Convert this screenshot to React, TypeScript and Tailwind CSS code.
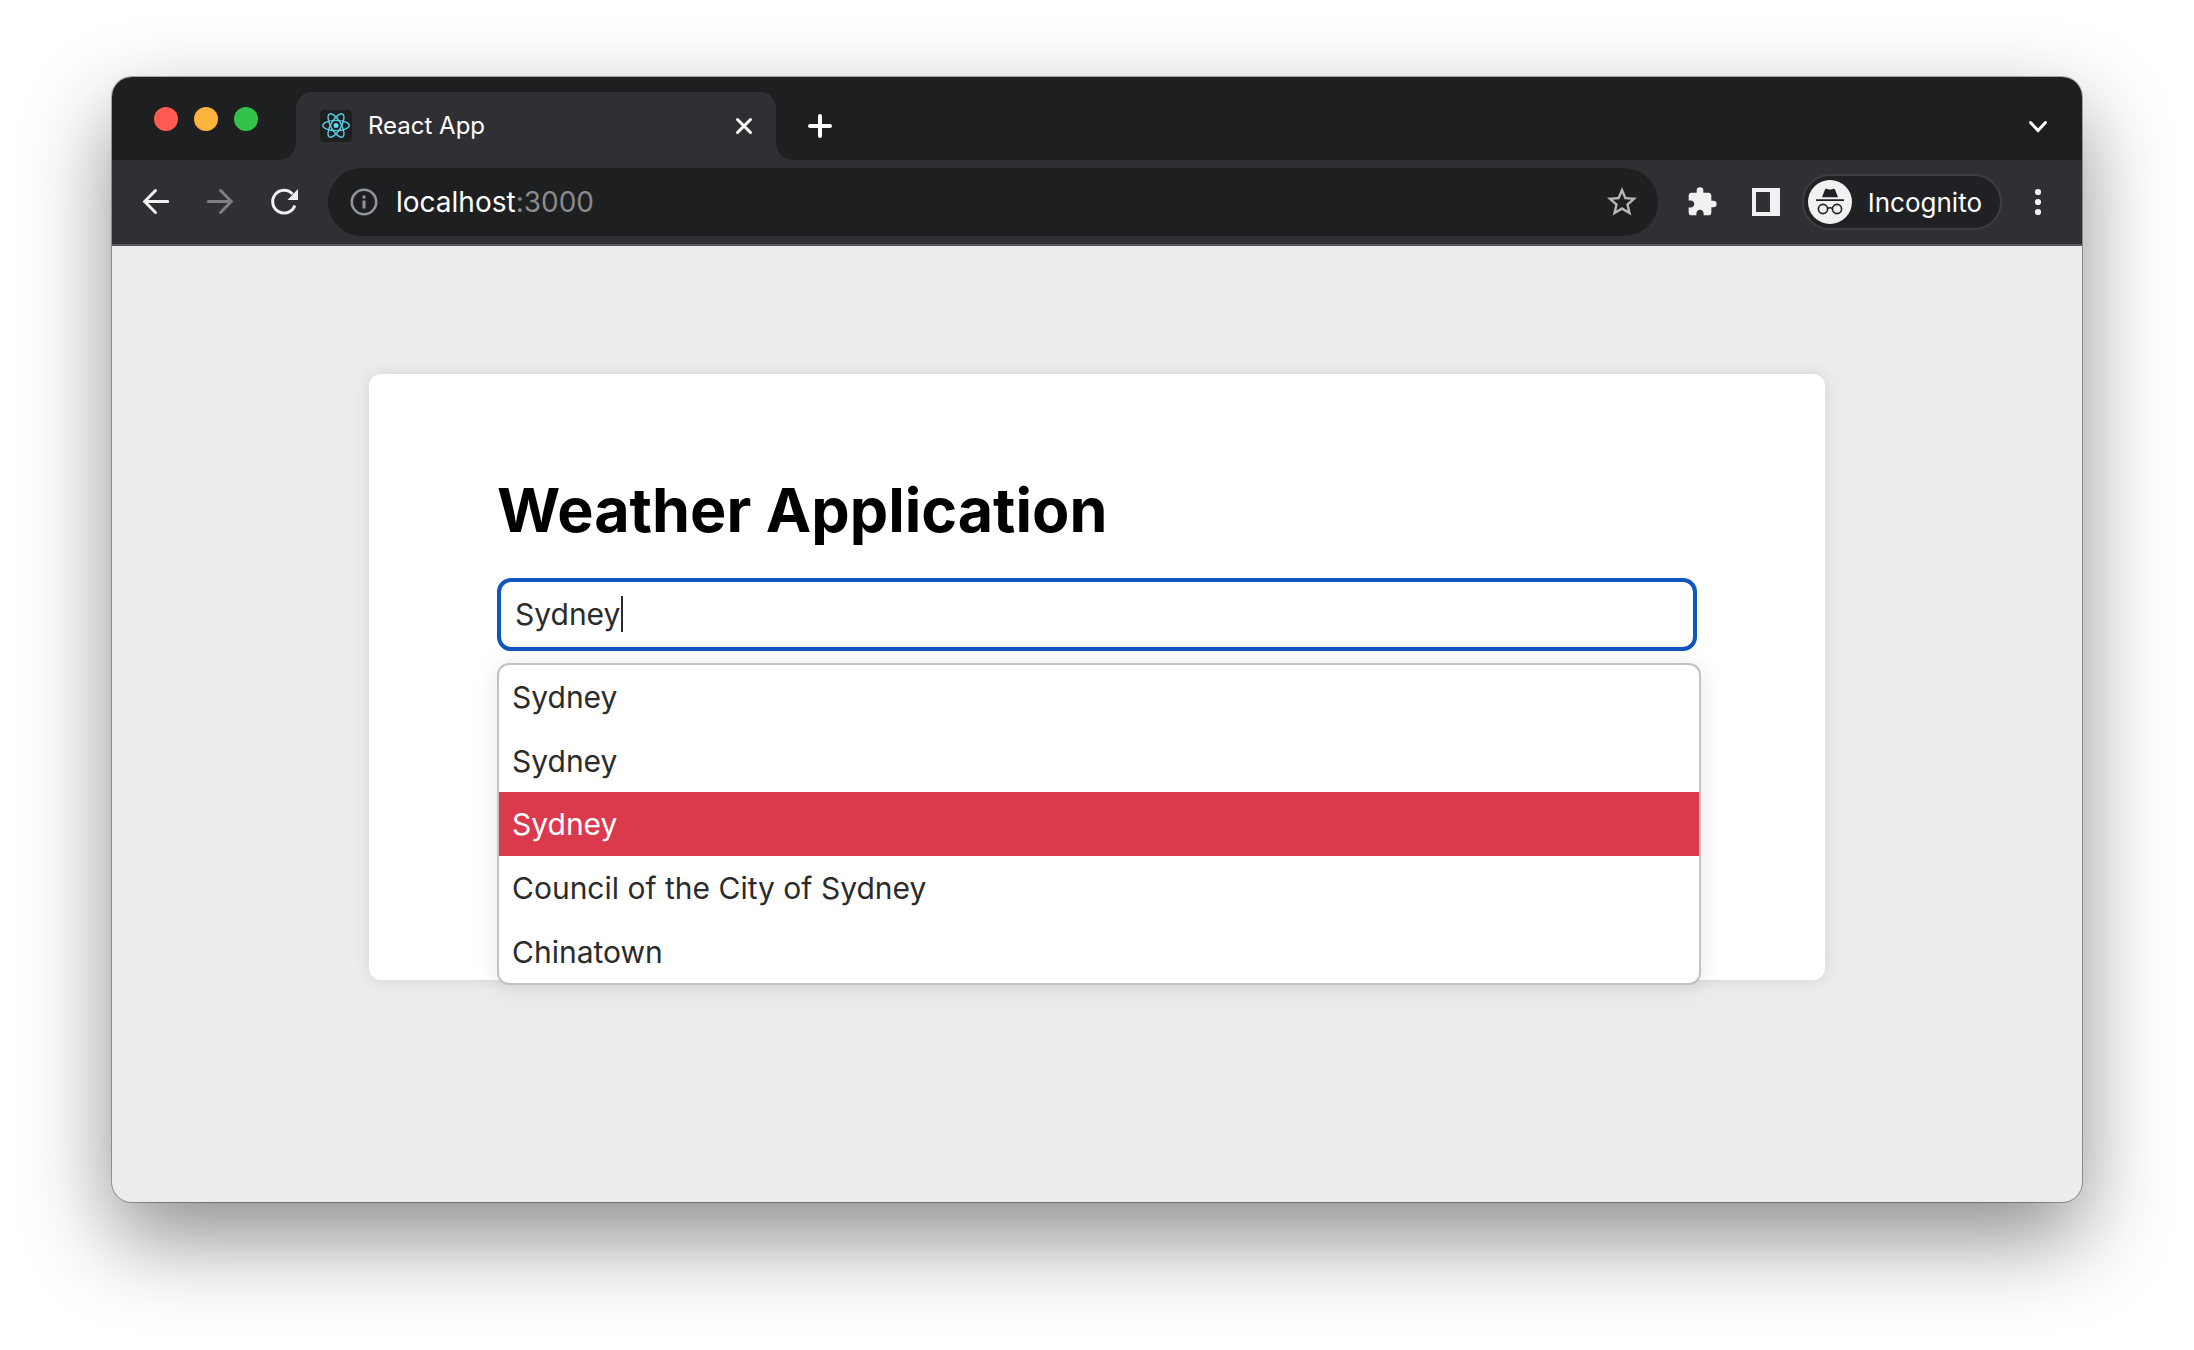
import { useState } from "react";
import type { ReactNode } from "react";
import { MdExtension, MdStarBorder } from "react-icons/md";

const suggestions = [
  "Sydney",
  "Sydney",
  "Sydney",
  "Council of the City of Sydney",
  "Chinatown",
];

function IconButton({
  label,
  className = "",
  disabled = false,
  children,
}: {
  label: string;
  className?: string;
  disabled?: boolean;
  children: ReactNode;
}) {
  return (
    <button
      type="button"
      aria-label={label}
      disabled={disabled}
      className={`flex size-8 shrink-0 items-center justify-center text-[#f1f1f4] disabled:text-[#7f7f82] ${className}`}
    >
      {children}
    </button>
  );
}

function ReactLogo() {
  return (
    <svg viewBox="0 0 32 32" className="size-8 shrink-0 rounded bg-[#1e1f1f]" aria-hidden="true">
      <circle cx="16" cy="15.5" r="2.5" fill="#61dafb" />
      <g fill="none" stroke="#5ccbea" strokeWidth="1.4">
        <ellipse cx="16" cy="15.5" rx="13.2" ry="5.1" />
        <ellipse cx="16" cy="15.5" rx="13.2" ry="5.1" transform="rotate(60 16 15.5)" />
        <ellipse cx="16" cy="15.5" rx="13.2" ry="5.1" transform="rotate(120 16 15.5)" />
      </g>
    </svg>
  );
}

function IncognitoBadge() {
  return (
    <svg viewBox="0 0 44 44" className="size-11 shrink-0" aria-hidden="true">
      <circle cx="22" cy="22" r="22" fill="#f1f1f4" />
      <path
        d="M14 17.2 16.8 10c.4-1 1.2-1.4 2.2-1.1l2 .7c.7.2 1.3.2 2 0l2-.7c1-.3 1.8.1 2.2 1.1L30 17.2z"
        fill="#202124"
      />
      <path d="M8 19.2h28v1.7H8z" fill="#202124" />
      <g fill="none" stroke="#202124" strokeWidth="1.6">
        <circle cx="15" cy="29" r="4.6" />
        <circle cx="29" cy="29" r="4.6" />
        <path d="M19.4 28.6c1.6-1 3.6-1 5.2 0" />
      </g>
    </svg>
  );
}

function TabStrip() {
  return (
    <div className="flex h-[83px] items-end bg-[#1e1f21]">
      <div className="flex h-full shrink-0 items-center gap-4 pr-[38px] pl-[42px]">
        <button type="button" aria-label="Close window" className="size-6 rounded-full bg-[#ff5a52]" />
        <button type="button" aria-label="Minimise window" className="size-6 rounded-full bg-[#fdb43f]" />
        <button type="button" aria-label="Zoom window" className="size-6 rounded-full bg-[#33c249]" />
      </div>
      <div className="relative flex h-[68px] w-[480px] items-center rounded-t-2xl bg-[#302f33] pr-4 pl-6">
        <span className="absolute bottom-0 -left-4 size-4 bg-[radial-gradient(circle_at_0_0,transparent_15px,#302f33_16px)]" />
        <span className="absolute -right-4 bottom-0 size-4 bg-[radial-gradient(circle_at_100%_0,transparent_15px,#302f33_16px)]" />
        <ReactLogo />
        <span className="ml-4 flex-1 truncate text-[24px] leading-8 text-white">React App</span>
        <IconButton label="Close tab">
          <svg viewBox="0 0 32 32" className="size-8" aria-hidden="true">
            <path d="m9.5 9.5 13 13m0-13-13 13" fill="none" stroke="#fff" strokeWidth="3" strokeLinecap="round" />
          </svg>
        </IconButton>
      </div>
      <div className="flex h-[68px] flex-1 items-center justify-between px-7">
        <IconButton label="New tab">
          <svg viewBox="0 0 32 32" className="size-8" aria-hidden="true">
            <path d="M16 6v20M6 16h20" fill="none" stroke="#fff" strokeWidth="4" strokeLinecap="round" />
          </svg>
        </IconButton>
        <IconButton label="Search tabs">
          <svg viewBox="0 0 32 32" className="size-8" aria-hidden="true">
            <path d="m8.5 12.5 7.5 8 7.5-8" fill="none" stroke="#fff" strokeWidth="3" strokeLinecap="round" />
          </svg>
        </IconButton>
      </div>
    </div>
  );
}

function Toolbar() {
  return (
    <div className="flex h-[86px] items-center border-b-2 border-[#59575d] bg-[#302f33] px-7">
      <div className="flex gap-8">
        <IconButton label="Back">
          <svg viewBox="0 0 32 32" className="size-8" aria-hidden="true">
            <path d="M15.5 4.5 4.7 15.5l10.800 11M4.7 15.500h23" fill="none" stroke="currentColor" strokeWidth="3" strokeLinecap="round" />
          </svg>
        </IconButton>
        <IconButton label="Forward" disabled>
          <svg viewBox="0 0 32 32" className="size-8" aria-hidden="true">
            <path d="m16.5 4.500 10.800 11-10.800 11M27.300 15.500h-23" fill="none" stroke="currentColor" strokeWidth="3" strokeLinecap="round" />
          </svg>
        </IconButton>
        <IconButton label="Reload">
          <svg viewBox="0 0 32 32" className="size-8" aria-hidden="true">
            <path d="M26.8 19.5A11.4 11.4 0 1 1 24.5 8" fill="none" stroke="currentColor" strokeWidth="3" />
            <path d="M30 3v11H19.5z" fill="currentColor" />
          </svg>
        </IconButton>
      </div>

      <div className="ml-7 flex h-[68px] min-w-0 flex-1 items-center rounded-full bg-[#1e1f21] pr-[18px] pl-[22px]">
        <button type="button" aria-label="View site information" className="shrink-0">
          <svg viewBox="0 0 28 28" className="size-7" aria-hidden="true">
            <circle cx="14" cy="14" r="12.2" fill="none" stroke="#90959d" strokeWidth="2.6" />
            <path d="M12.5 7.5h3v3h-3zM12.5 12.5h3v8h-3z" fill="#90959d" />
          </svg>
        </button>
        <div
          role="textbox"
          aria-label="Address and search bar"
          tabIndex={0}
          className="ml-[18px] flex-1 truncate text-[28px] leading-9 text-white"
        >
          localhost<span className="text-[#8a8a8d]">:3000</span>
        </div>
        <button type="button" aria-label="Bookmark this tab" className="shrink-0 text-[#b6b6b8]">
          <MdStarBorder className="size-9" />
        </button>
      </div>

      <div className="ml-7 flex gap-8">
        <IconButton label="Extensions">
          <MdExtension className="size-8" />
        </IconButton>
        <IconButton label="Side panel">
          <svg viewBox="0 0 28 28" className="size-7" aria-hidden="true">
            <path fillRule="evenodd" d="M0 0h28v28H0zM4 4v20h14V4z" fill="currentColor" />
          </svg>
        </IconButton>
      </div>

      <button
        type="button"
        className="ml-5 flex h-14 shrink-0 items-center gap-4 rounded-full border-2 border-[#3e3e40] bg-[#202124] pr-[18px] pl-1 text-[26px] text-white"
      >
        <IncognitoBadge />
        Incognito
      </button>

      <IconButton label="Menu" className="ml-5">
        <svg viewBox="0 0 32 32" className="size-8" fill="currentColor" aria-hidden="true">
          <circle cx="16" cy="6" r="3.1" />
          <circle cx="16" cy="16" r="3.1" />
          <circle cx="16" cy="26" r="3.1" />
        </svg>
      </IconButton>
    </div>
  );
}

function CitySearch() {
  const [query, setQuery] = useState("Sydney");
  const [active, setActive] = useState(2);

  return (
    <div className="relative mt-7">
      <input
        type="text"
        role="combobox"
        aria-label="City"
        aria-expanded="true"
        aria-controls="city-options"
        autoComplete="off"
        value={query}
        onChange={(event) => setQuery(event.target.value)}
        className="block h-[73px] w-full rounded-[14px] border-4 border-[#0f56c0] bg-white px-3.5 pb-0.5 text-[30px] text-[#2b2b2b] caret-transparent outline-none"
      />
      {query === "Sydney" && (
        <span aria-hidden="true" className="absolute top-[18px] left-[124px] h-9 w-0.5 bg-[#2b2b2b]" />
      )}
      <ul
        id="city-options"
        role="listbox"
        aria-label="City suggestions"
        className="absolute top-full left-0 mt-3 grid h-[322px] w-[calc(100%+4px)] grid-rows-5 overflow-hidden rounded-xl border-2 border-[#c2c2c2] bg-white shadow-[0_2px_24px_rgba(0,0,0,0.1)]"
      >
        {suggestions.map((name, index) => (
          <li
            key={index}
            role="option"
            aria-selected={index === active}
            onMouseEnter={() => setActive(index)}
            className="flex items-center px-[13px] pt-0.5 text-[30px] text-[#2b2b2b] aria-selected:bg-[#db3a4d] aria-selected:text-white"
          >
            {name}
          </li>
        ))}
      </ul>
    </div>
  );
}

export default function App() {
  return (
    <div className="min-h-screen bg-white px-28 pt-[77px] pb-[148px] font-['Inter',sans-serif]">
      <div className="overflow-hidden rounded-[20px] bg-[#ececec] shadow-[0_0_0_1px_rgba(0,0,0,0.3),0_36px_88px_rgba(0,0,0,0.45)]">
        <header>
          <TabStrip />
          <Toolbar />
        </header>
        <main className="px-[257px] pt-32 pb-[222px]">
          <section className="min-h-[606px] rounded-xl bg-white px-32 pt-24 shadow-[0_0_16px_rgba(0,0,0,0.1)]">
            <h1 className="text-[61px] leading-[80px] font-bold text-black">Weather Application</h1>
            <CitySearch />
          </section>
        </main>
      </div>
    </div>
  );
}
